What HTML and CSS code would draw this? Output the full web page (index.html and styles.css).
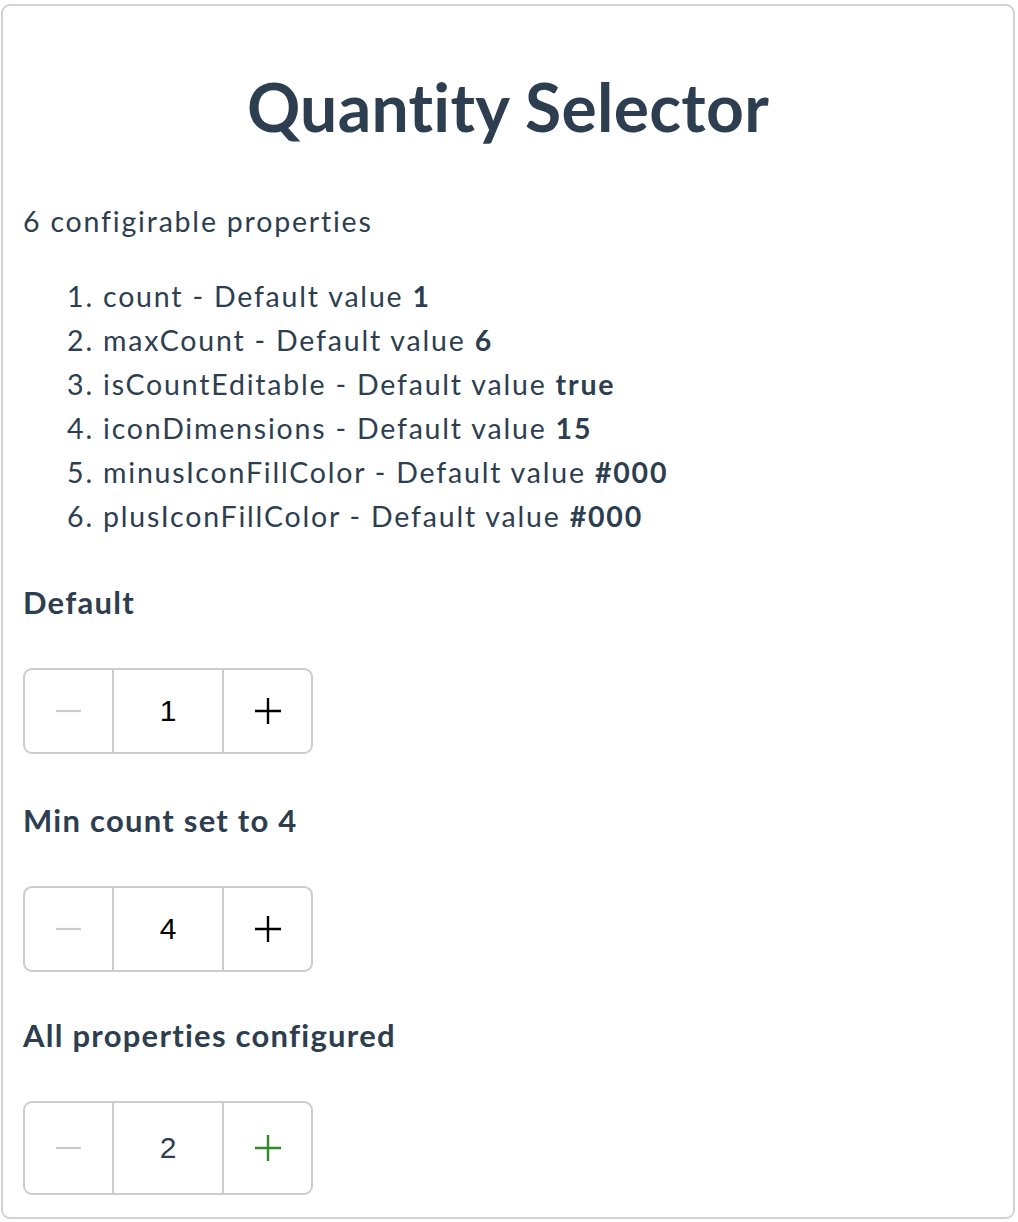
FILE: index.html
```html
<!DOCTYPE html>
<html lang="en">
<head>
<meta charset="utf-8">
<title>Quantity Selector</title>
<link rel="stylesheet" href="styles.css">
</head>
<body>
<div class="page">
  <div class="card">
    <h1 class="title">Quantity Selector</h1>
    <p class="intro">6 configirable properties</p>
    <ol class="props">
      <li>count - Default value <b>1</b></li>
      <li>maxCount - Default value <b>6</b></li>
      <li>isCountEditable - Default value <b>true</b></li>
      <li>iconDimensions - Default value <b>15</b></li>
      <li>minusIconFillColor - Default value <b>#000</b></li>
      <li>plusIconFillColor - Default value <b>#000</b></li>
    </ol>

    <h3 class="section s1">Default</h3>
    <div class="qty">
      <div class="btn"><svg width="26" height="26" viewBox="0 0 26 26"><path d="M0 13H25" stroke="#cccccc" stroke-width="2.2"/></svg></div>
      <div class="count">1</div>
      <div class="btn"><svg width="26" height="26" viewBox="0 0 26 26"><path d="M0 13H26M13 0V26" stroke="#000" stroke-width="2.4"/></svg></div>
    </div>

    <h3 class="section s2">Min count set to 4</h3>
    <div class="qty">
      <div class="btn"><svg width="26" height="26" viewBox="0 0 26 26"><path d="M0 13H25" stroke="#cccccc" stroke-width="2.2"/></svg></div>
      <div class="count">4</div>
      <div class="btn"><svg width="26" height="26" viewBox="0 0 26 26"><path d="M0 13H26M13 0V26" stroke="#000" stroke-width="2.4"/></svg></div>
    </div>

    <h3 class="section s3">All properties configured</h3>
    <div class="qty tall">
      <div class="btn"><svg width="26" height="26" viewBox="0 0 26 26"><path d="M0 13H25" stroke="#cccccc" stroke-width="2.2"/></svg></div>
      <div class="count themed">2</div>
      <div class="btn"><svg width="26" height="26" viewBox="0 0 26 26"><path d="M0 13H26M13 0V26" stroke="#2e8a24" stroke-width="2.4"/></svg></div>
    </div>
  </div>
</div>
</body>
</html>
```

FILE: styles.css
```css
html, body {
  margin: 0;
  padding: 0;
  background: #ffffff;
}

.page {
  padding: 4px 3px 0 1px;
}

.card {
  box-sizing: border-box;
  height: 1215px;
  border: 2px solid #d2d2d2;
  border-radius: 9px;
  padding: 0 20px;
  color: #2c3e50;
  font-family: Lato, "Noto Sans", sans-serif;
  font-variant-ligatures: none;
  display: flex;
  flex-direction: column;
  align-items: flex-start;
}

.title {
  align-self: stretch;
  text-align: center;
  margin: 61px 0 0;
  font-size: 66px;
  line-height: 80px;
  font-weight: 700;
  letter-spacing: 0.3px;
}

.intro {
  margin: 52px 0 0;
  font-size: 28.5px;
  line-height: 44px;
  letter-spacing: 1.8px;
}

.props {
  margin: 31px 0 0;
  padding-left: 80px;
  font-size: 28.5px;
  line-height: 44px;
  letter-spacing: 1.8px;
}

.props b {
  font-weight: 700;
}

.section {
  margin: 0;
  font-size: 31px;
  line-height: 40px;
  font-weight: 700;
  letter-spacing: 1.25px;
}

.s1 { margin-top: 44px; }
.s2 { margin-top: 46px; }
.s3 { margin-top: 43px; }

.qty {
  margin-top: 46px;
  box-sizing: border-box;
  width: 290px;
  height: 86px;
  border: 2px solid #cccccc;
  border-radius: 9px;
  display: flex;
}

.qty.tall {
  height: 94px;
}

.btn {
  width: 87px;
  display: flex;
  align-items: center;
  justify-content: center;
}

.btn svg {
  display: block;
}

.count {
  box-sizing: border-box;
  width: 112px;
  border-left: 2px solid #cccccc;
  border-right: 2px solid #cccccc;
  display: flex;
  align-items: center;
  justify-content: center;
  font-family: "Liberation Sans", Arial, sans-serif;
  font-size: 30px;
  color: #000000;
}

.count.themed {
  color: #2c3e50;
}
```
